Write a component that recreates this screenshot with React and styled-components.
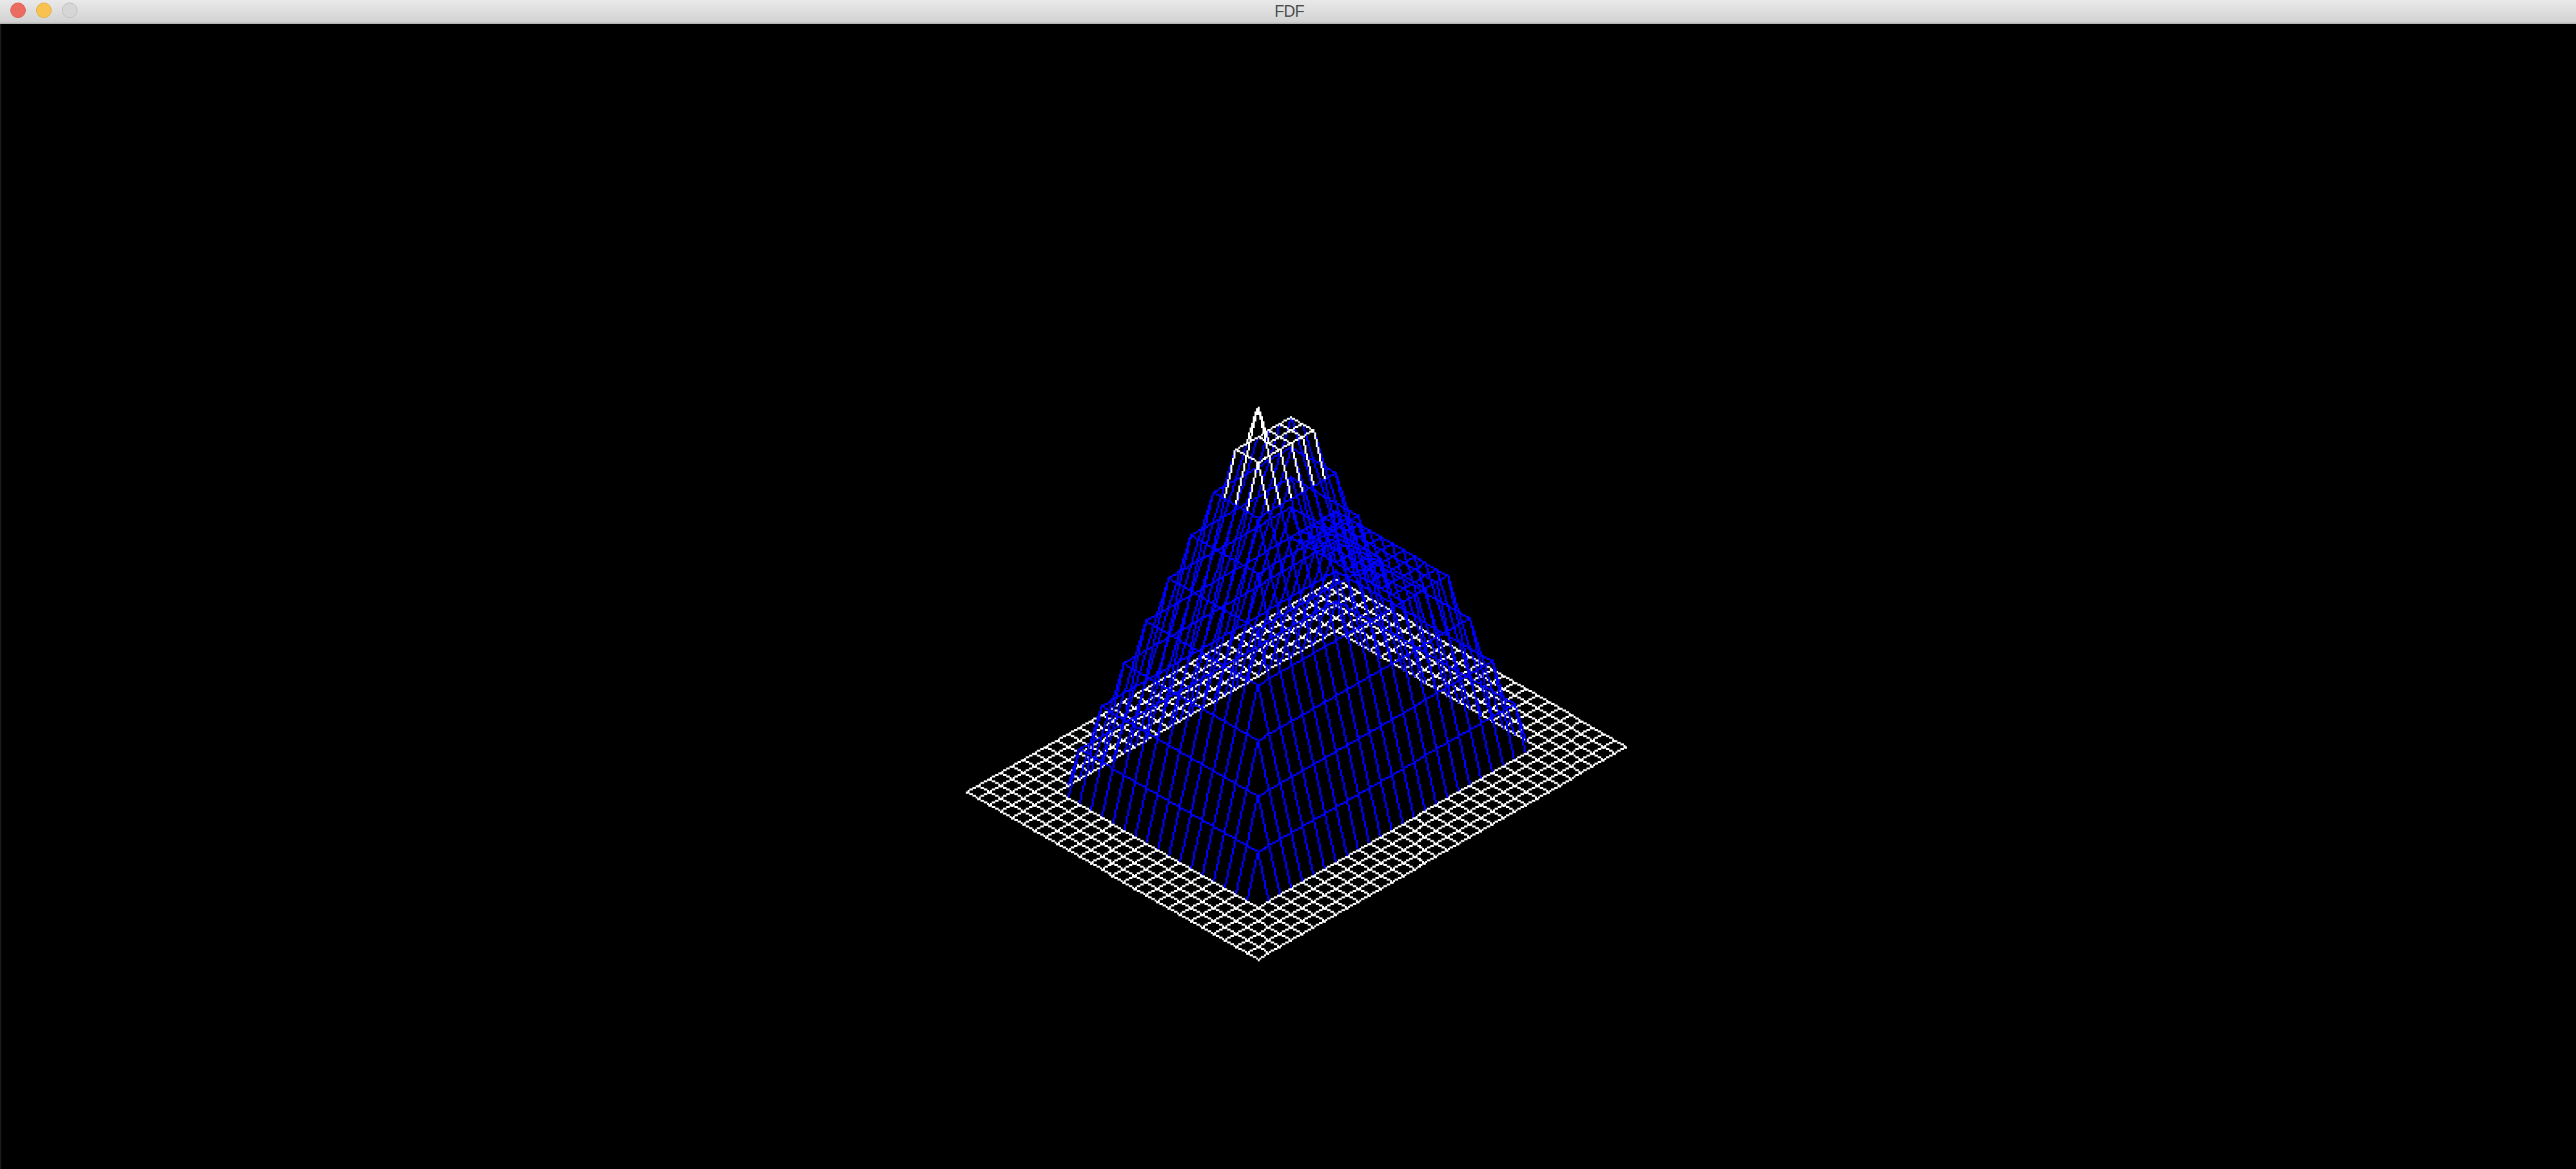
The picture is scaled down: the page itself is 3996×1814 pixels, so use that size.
import React from "react"
import styled, { createGlobalStyle } from "styled-components"

const GlobalStyle = createGlobalStyle`
  html, body {
    margin: 0;
    padding: 0;
    background: #000;
  }
`

const Window = styled.div`
  width: 3996px;
  height: 1814px;
  display: flex;
  flex-direction: column;
  overflow: hidden;
`

const TitleBar = styled.div`
  flex: 0 0 37px;
  box-sizing: border-box;
  display: flex;
  align-items: center;
  gap: 16px;
  padding: 0 0 4px 16px;
  position: relative;
  background: linear-gradient(#e9e9e9, #d2d2d2);
  border-bottom: 2px solid #b5b5b5;
`

const Light = styled.span`
  width: 24px;
  height: 24px;
  box-sizing: border-box;
  border-radius: 50%;
  background: ${(p) => p.$fill};
  border: 1px solid ${(p) => p.$edge};
`

const Title = styled.div`
  position: absolute;
  left: 4px;
  right: 0;
  top: 3px;
  text-align: center;
  font: 25px/28px "Liberation Sans", Arial, sans-serif;
  letter-spacing: -0.8px;
  color: #4d4d4d;
`

const Canvas = styled.div`
  flex: 1;
  background: #000;
  border-left: 2px solid #1c1c1c;
`

const Scene = styled.svg`
  display: block;
  filter: blur(0.6px);
`

const Edge = styled.path`
  fill: ${(p) => (p.$white ? "#ffffff" : "#0000ff")};
`

// map size and iso projection
const COLS = 26
const ROWS = 33
const ORIGIN_X = 2072.6
const ORIGIN_Y = 899
const STEP_X = 17.32
const STEP_Y = 10
const LEVEL = 66.4
const TOP = 8
const GRID = 2.5
const DOT = 3

function backHeight(y) {
  if (y <= 8) return y - 4
  if (y <= 12) return 4
  return y - 8
}

function heightAt(x, y) {
  if (x === 13 && y === 20) return 9
  const z = Math.min(x - 4, 22 - x, 29 - y, backHeight(y), TOP)
  return Math.max(z, 0)
}

function project(x, y) {
  return {
    px: ORIGIN_X + (x - y) * STEP_X,
    py: ORIGIN_Y + (x + y) * STEP_Y - heightAt(x, y) * LEVEL,
  }
}

function isWhite(from, to) {
  if (from >= TOP) return true
  return from === 0 && to === 0
}

// the map was plotted pixel by pixel and scaled up, so keep the staircase
function pixelLine(a, b) {
  const dx = (b.px - a.px) / GRID
  const dy = (b.py - a.py) / GRID
  const steps = Math.ceil(Math.max(Math.abs(dx), Math.abs(dy)))
  let d = ""
  for (let i = 0; i <= steps; i++) {
    const cx = Math.round(a.px / GRID + (dx * i) / steps) * GRID - DOT / 2
    const cy = Math.round(a.py / GRID + (dy * i) / steps) * GRID - DOT / 2
    d += `M${cx} ${cy}h${DOT}v${DOT}h-${DOT}z`
  }
  return d
}

function buildEdges() {
  const edges = []
  for (let y = 0; y <= ROWS; y++) {
    for (let x = 0; x <= COLS; x++) {
      const a = project(x, y)
      const z = heightAt(x, y)
      if (x < COLS) {
        edges.push({
          d: pixelLine(a, project(x + 1, y)),
          white: isWhite(z, heightAt(x + 1, y)),
          key: `h${x}-${y}`,
        })
      }
      if (y < ROWS) {
        edges.push({
          d: pixelLine(a, project(x, y + 1)),
          white: isWhite(z, heightAt(x, y + 1)),
          key: `v${x}-${y}`,
        })
      }
    }
  }
  return edges
}

export default function App() {
  const edges = buildEdges()

  return (
    <>
      <GlobalStyle />
      <Window>
        <TitleBar>
          <Light $fill="#ec6b60" $edge="#d85a50" />
          <Light $fill="#f7c250" $edge="#e0a83c" />
          <Light $fill="#d6d6d6" $edge="#b9b9b9" />
          <Title>FDF</Title>
        </TitleBar>
        <Canvas>
          <Scene width="3994" height="1777" viewBox="2 37 3994 1777">
            {edges.map((e) => (
              <Edge key={e.key} d={e.d} $white={e.white} />
            ))}
          </Scene>
        </Canvas>
      </Window>
    </>
  )
}
